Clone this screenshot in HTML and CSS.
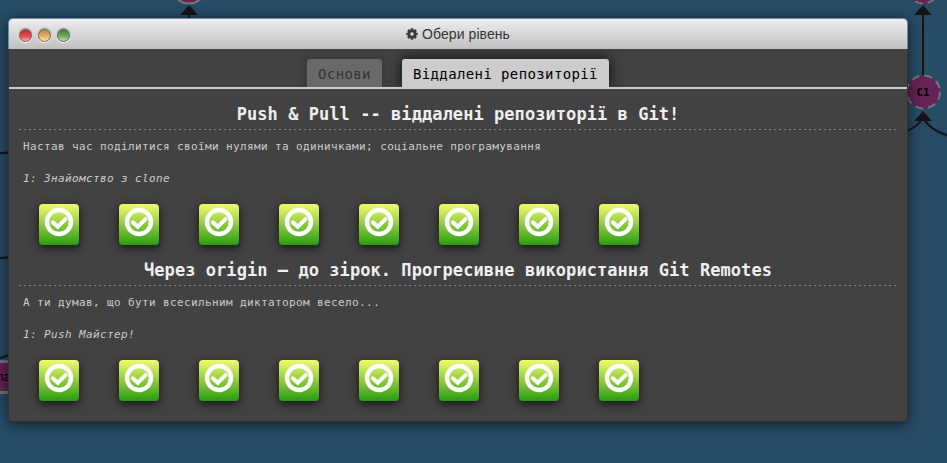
FILE: index.html
```
<!DOCTYPE html>
<html lang="uk">
<head>
<meta charset="utf-8">
<title>Обери рівень</title>
<link rel="stylesheet" href="styles.css">
</head>
<body>
<svg class="graph" width="947" height="463" viewBox="0 0 947 463">
  <g class="edges">
    <path d="M189 18V12M923 75V12M923 117Q919 127 900 134M923 117Q929 130 949 136M-2 153.500L12 152M-2 258.500L12 257M-2 359L14 353"/>
  </g>
  <path class="arrow" d="M189 5l9 10h-18zM923 5l9 10h-18zM923 111l9 10h-18z"/>
  <circle class="node" cx="189" cy="-13" r="16.500"/>
  <circle class="node dashed" cx="923" cy="-13" r="16.500"/>
  <circle class="node dashed" cx="923.500" cy="92" r="16.500"/>
  <text class="commit" x="923" y="96" text-anchor="middle">C1</text>
  <rect class="node branch" x="-40" y="361.500" width="60" height="31"/>
  <text class="branch-name" x="-4" y="381">ла</text>
</svg>
<svg class="symbols" width="0" height="0">
  <symbol id="check" viewBox="0 0 30 30">
    <circle cx="15" cy="15" r="12" fill="none" stroke="#fff" stroke-width="4.400"/>
    <path d="M8.800 15.300l4.900 4.400 7.800-7.600" fill="none" stroke="#fff" stroke-width="4" stroke-linecap="round"/>
  </symbol>
</svg>
<main class="window">
  <header class="titlebar">
    <div class="controls"><i class="light red"></i><i class="light amber"></i><i class="light green"></i></div>
    <svg class="gear" viewBox="0 0 12 12">
      <path d="M6 .3v11.400M.3 6h11.400M2 2l8 8M10 2l-8 8" stroke="#3c3c3c" stroke-width="2.600"/>
      <circle cx="6" cy="6" r="3.100" fill="#dcdcdc" stroke="#3c3c3c" stroke-width="2.600"/>
    </svg>
    <span>Обери рівень</span>
  </header>
  <nav class="tabs"><div class="tab">Основи</div><div class="tab selected">Віддалені репозиторії</div></nav>
  <section class="sequence">
    <h2>Push &amp; Pull -- віддалені репозиторії в Git!</h2>
    <p>Настав час поділитися своїми нулями та одиничками; соціальне програмування</p>
    <p class="level-name">1: Знайомство з clone</p>
    <div class="levels">
      <div class="level"><svg><use href="#check"/></svg></div><div class="level"><svg><use href="#check"/></svg></div><div class="level"><svg><use href="#check"/></svg></div><div class="level"><svg><use href="#check"/></svg></div><div class="level"><svg><use href="#check"/></svg></div><div class="level"><svg><use href="#check"/></svg></div><div class="level"><svg><use href="#check"/></svg></div><div class="level"><svg><use href="#check"/></svg></div>
    </div>
  </section>
  <section class="sequence">
    <h2>Через origin – до зірок. Прогресивне використання Git Remotes</h2>
    <p>А ти думав, що бути всесильним диктатором весело...</p>
    <p class="level-name">1: Push Майстер!</p>
    <div class="levels">
      <div class="level"><svg><use href="#check"/></svg></div><div class="level"><svg><use href="#check"/></svg></div><div class="level"><svg><use href="#check"/></svg></div><div class="level"><svg><use href="#check"/></svg></div><div class="level"><svg><use href="#check"/></svg></div><div class="level"><svg><use href="#check"/></svg></div><div class="level"><svg><use href="#check"/></svg></div><div class="level"><svg><use href="#check"/></svg></div>
    </div>
  </section>
</main>
</body>
</html>
```
FILE: styles.css
```
* { box-sizing: border-box; }
body {
  margin: 0;
  height: 463px;
  padding: 18px 39px 0 8px;
  overflow: hidden;
  background: #274c66;
  font-family: "DejaVu Sans Mono", monospace;
}
.graph { position: absolute; left: 0; top: 0; }
.symbols { position: absolute; }
.edges path { fill: none; stroke: #141414; stroke-width: 2; }
.arrow { fill: #141414; }
.node { fill: #662255; stroke: #777; stroke-width: 2; }
.dashed { stroke-dasharray: 8 5; }
.branch { stroke-width: 3; }
.commit { font-size: 11px; font-weight: bold; fill: #000; }
.branch-name { font: 13px "Liberation Sans", sans-serif; fill: #000; }

.window {
  position: relative;
  width: 900px;
  height: 404px;
  border: 1px solid #333;
  border-top: 0;
  border-radius: 5px;
  background: #424242;
  box-shadow: 0 2px 14px rgba(0, 0, 0, .65);
}
.titlebar {
  display: flex;
  align-items: center;
  justify-content: center;
  height: 31px;
  margin: 0 -1px;
  border: 1px solid #6c8ba4;
  border-bottom: 0;
  border-radius: 5px 5px 0 0;
  background: linear-gradient(#efedef, #c1c1c1);
  color: #333;
  font: 14px "Liberation Sans", sans-serif;
}
.controls { position: absolute; left: 10px; top: 11px; display: flex; gap: 6px; }
.light {
  width: 13px;
  height: 13px;
  border: 1px solid #7b5555;
  border-radius: 50%;
  box-shadow: 0 1px 1px #fff, 0 -1px 1px #888;
}
.red { background: linear-gradient(#b62f35, #e94e50 60%, #f5b3b3); }
.amber { background: linear-gradient(#b88745, #e8b66c 60%, #f8e1b9); border-color: #7b674f; }
.green { background: linear-gradient(#467b3b, #73b25e 60%, #c4e3b8); border-color: #506b4b; }
.gear { width: 12px; height: 12px; margin-right: 4px; }
.titlebar span { letter-spacing: .08px; }

.tabs {
  display: flex;
  justify-content: center;
  gap: 20px;
  height: 40px;
  padding-top: 10px;
  border-bottom: 2px solid #ccc;
}
.tab {
  height: 28px;
  padding: 0 11px;
  border-radius: 3px 3px 0 0;
  background: #696969;
  color: #333;
  font-size: 14px;
  line-height: 30px;
  letter-spacing: .38px;
  white-space: nowrap;
  box-shadow: 0 0 10px rgba(0, 0, 0, .25);
}
.selected { background: #ccc; color: #000; box-shadow: 0 0 14px rgba(0, 0, 0, .9); }
.tab, .selected { clip-path: inset(-10px -16px 0 -16px); }

.sequence { height: 156px; padding: 12px 10px 0; color: #ccc; }
h2 {
  height: 29px;
  margin: 0 0 5px;
  border-bottom: 1px solid transparent;
  background: repeating-linear-gradient(90deg, #858585 0 2px, transparent 2px 5px) 0 100% / 100% 1px no-repeat border-box;
  color: #eee;
  font-size: 17px;
  line-height: 26px;
  letter-spacing: .06px;
  text-align: center;
  white-space: nowrap;
}
p {
  height: 24px;
  margin: 0 0 8px;
  padding-left: 4px;
  font-size: 11px;
  line-height: 24px;
  letter-spacing: .38px;
  white-space: nowrap;
}
.level-name { font-style: italic; }
.levels { display: flex; gap: 40px; padding: 5px 20px 0; }
.level {
  display: flex;
  justify-content: center;
  width: 40px;
  height: 41px;
  padding-top: 3px;
  border-radius: 4px;
  background: linear-gradient(#f3fa70, #2a9c10);
  box-shadow: 0 3px 10px rgba(0, 0, 0, .7);
}
.level svg { width: 30px; height: 30px; }
```
